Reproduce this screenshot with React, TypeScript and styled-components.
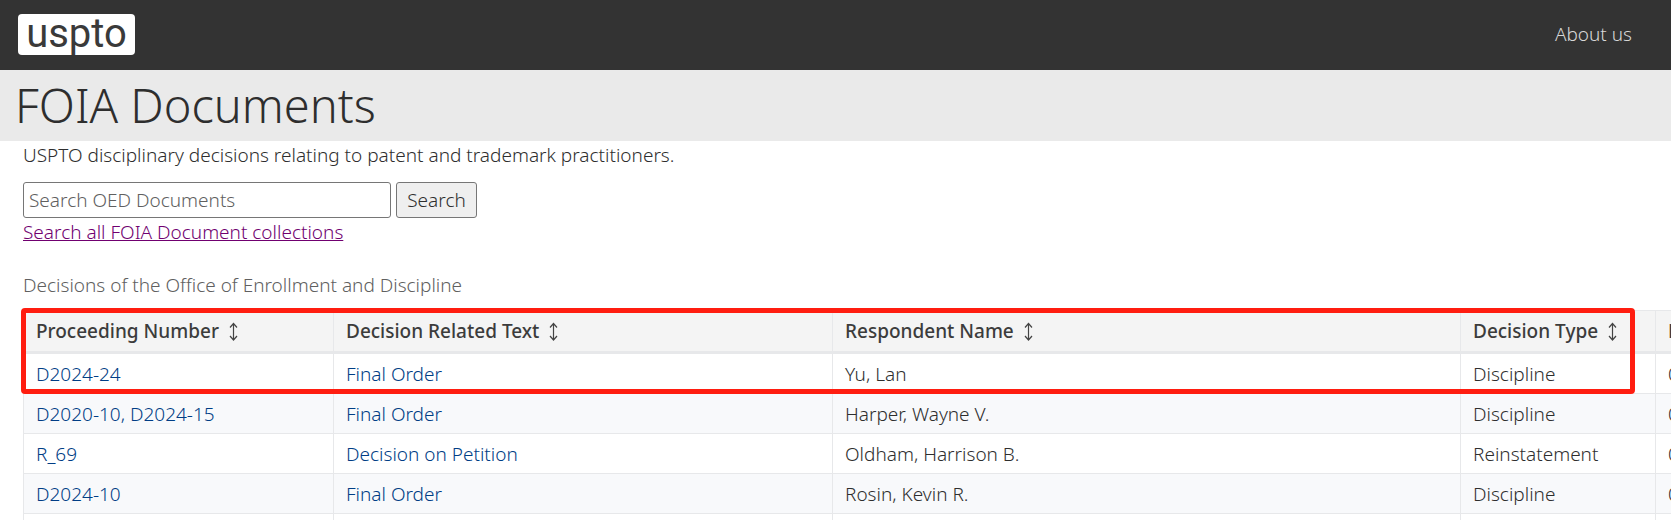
import React from "react";
import styled, { createGlobalStyle } from "styled-components";

const GlobalStyle = createGlobalStyle`
  *, *::before, *::after { box-sizing: border-box; }
  body {
    margin: 0;
    overflow-x: hidden;
    background: #fff;
    color: #2e2e2e;
    font-family: "Segoe UI", "Noto Sans", sans-serif;
    font-size: 19px;
    font-weight: 300;
    line-height: 28px;
  }
`;

const TopBar = styled.header`
  display: flex;
  align-items: center;
  justify-content: space-between;
  height: 70px;
  padding: 0 39px 2px 18px;
  background: #333;
`;

const Logo = styled.a`
  display: flex;
  align-items: center;
  justify-content: center;
  width: 117px;
  height: 41px;
  border-radius: 4px;
  background: #fff;
  color: #3a3a3a;
  font-family: Roboto, sans-serif;
  font-size: 40px;
  font-weight: 400;
  line-height: 38px;
  text-decoration: none;
`;

const NavLink = styled.a`
  color: #d8d8d8;
  text-decoration: none;
`;

const TitleBand = styled.div`
  display: flex;
  align-items: center;
  height: 71px;
  padding: 0 15px 2px;
  background: #eaeaea;
`;

const Title = styled.h1`
  margin: 0;
  font-size: 47px;
  font-weight: 300;
  line-height: 64px;
`;

const Main = styled.main`
  padding-left: 23px;
`;

const Intro = styled.p`
  margin: 0;
`;

const SearchForm = styled.form`
  display: flex;
  gap: 5px;
  margin-top: 13px;
`;

const SearchInput = styled.input`
  width: 368px;
  height: 36px;
  padding: 0 5px;
  border: 1px solid #767676;
  border-radius: 3px;
  background: #fff;
  color: inherit;
  font: inherit;
  &::placeholder { color: #606060; opacity: 1; }
`;

const SearchButton = styled.button`
  width: 81px;
  height: 36px;
  padding: 0;
  border: 1px solid #767676;
  border-radius: 3px;
  background: #efefef;
  color: inherit;
  font: inherit;
`;

const CollectionsLink = styled.a`
  display: inline-block;
  color: #700070;
  text-decoration: underline;
`;

const Caption = styled.p`
  margin: 25px 0 11px;
  color: #606060;
`;

const TableArea = styled.section`
  position: relative;
`;

const TableClip = styled.div`
  overflow: hidden;
`;

const Table = styled.table`
  width: calc(100% + 100px);
  table-layout: fixed;
  border-collapse: separate;
  border-spacing: 0;
`;

const Col = styled.col<{ $width?: number }>`
  width: ${(p) => (p.$width ? `${p.$width}px` : "auto")};
`;

const HeadCell = styled.th`
  height: 44px;
  padding: 0 12px;
  border: solid #e7e8ea;
  border-width: 1px 0 3px 1px;
  background: #f4f4f4;
  color: #3c3c3c;
  font-weight: 500;
  text-align: left;
  white-space: nowrap;
`;

const SortButton = styled.button`
  display: flex;
  align-items: center;
  gap: 10px;
  padding: 0;
  border: 0;
  background: none;
  color: inherit;
  font: inherit;
`;

const Row = styled.tr`
  &:nth-child(even) { background: #f8f9fb; }
`;

const Cell = styled.td`
  height: 40px;
  padding: 0 12px;
  border: solid #e7e8ea;
  border-width: 0 0 1px 1px;
  white-space: nowrap;
`;

const CellLink = styled.a`
  color: #003d85;
  text-decoration: none;
`;

const Highlight = styled.div`
  position: absolute;
  top: -2px;
  right: 36px;
  left: -2px;
  height: 86px;
  border: 5px solid #ff1d10;
  border-radius: 4px;
  pointer-events: none;
`;

const SortIcon = () => (
  <svg width="9" height="20" viewBox="0 0 9 20" fill="none" stroke="#444" strokeWidth="1.2" aria-hidden="true">
    <path d="M4.5 3v15M1 6.5L4.5 2.5L8 6.5M1 15L4.5 19L8 15" />
  </svg>
);

const headings = ["Proceeding Number", "Decision Related Text", "Respondent Name", "Decision Type"];

const decisions = [
  { numbers: ["D2024-24"], text: "Final Order", name: "Yu, Lan", type: "Discipline" },
  { numbers: ["D2020-10", "D2024-15"], text: "Final Order", name: "Harper, Wayne V.", type: "Discipline" },
  { numbers: ["R_69"], text: "Decision on Petition", name: "Oldham, Harrison B.", type: "Reinstatement" },
  { numbers: ["D2024-10"], text: "Final Order", name: "Rosin, Kevin R.", type: "Discipline" },
];

export default function App() {
  return (
    <>
      <GlobalStyle />
      <TopBar>
        <Logo href="#">uspto</Logo>
        <nav><NavLink href="#">About us</NavLink></nav>
      </TopBar>
      <TitleBand><Title>FOIA Documents</Title></TitleBand>
      <Main>
        <Intro>USPTO disciplinary decisions relating to patent and trademark practitioners.</Intro>
        <SearchForm onSubmit={(e) => e.preventDefault()}>
          <SearchInput type="text" aria-label="Search OED Documents" placeholder="Search OED Documents" />
          <SearchButton type="submit">Search</SearchButton>
        </SearchForm>
        <CollectionsLink href="#">Search all FOIA Document collections</CollectionsLink>
        <Caption id="decisions-caption">Decisions of the Office of Enrollment and Discipline</Caption>
        <TableArea>
          <TableClip>
            <Table aria-labelledby="decisions-caption">
              <colgroup>
                <Col $width={310} />
                <Col $width={499} />
                <Col />
                <Col $width={195} />
                <Col $width={116} />
              </colgroup>
              <thead>
                <tr>
                  {headings.map((heading) => (
                    <HeadCell key={heading} scope="col">
                      <SortButton type="button">{heading}<SortIcon /></SortButton>
                    </HeadCell>
                  ))}
                  <HeadCell scope="col">D</HeadCell>
                </tr>
              </thead>
              <tbody>
                {decisions.map((d) => (
                  <Row key={d.numbers[0]}>
                    <Cell>
                      <CellLink href="#">{d.numbers.join(", ")}</CellLink>
                    </Cell>
                    <Cell><CellLink href="#">{d.text}</CellLink></Cell>
                    <Cell>{d.name}</Cell>
                    <Cell>{d.type}</Cell>
                    <Cell>0</Cell>
                  </Row>
                ))}
                <Row><Cell /><Cell /><Cell /><Cell /><Cell /></Row>
              </tbody>
            </Table>
          </TableClip>
          <Highlight />
        </TableArea>
      </Main>
    </>
  );
}
